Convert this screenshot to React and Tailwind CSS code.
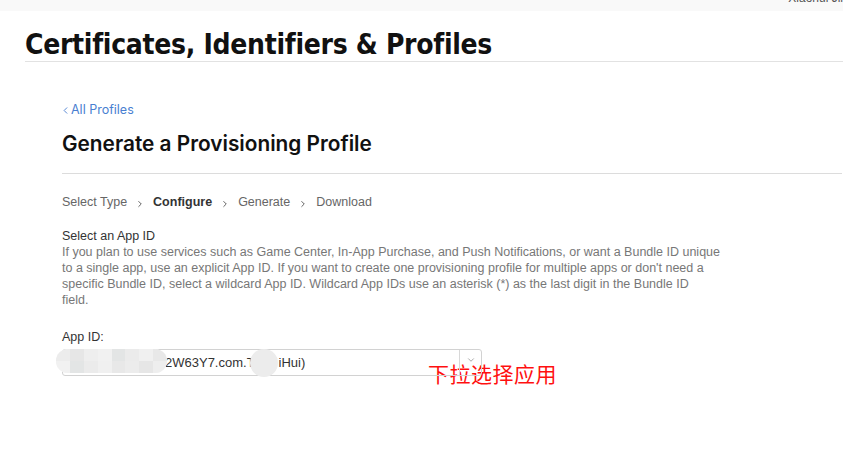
import { ChevronLeft, ChevronRight, ChevronDown } from 'lucide-react';

const steps = [
    { name: 'Select Type', active: false },
    { name: 'Configure', active: true },
    { name: 'Generate', active: false },
    { name: 'Download', active: false },
];

const description = [
    'If you plan to use services such as Game Center, In-App Purchase, and Push Notifications, or want a Bundle ID unique',
    "to a single app, use an explicit App ID. If you want to create one provisioning profile for multiple apps or don't need a",
    'specific Bundle ID, select a wildcard App ID. Wildcard App IDs use an asterisk (*) as the last digit in the Bundle ID',
    'field.',
];

const mosaic = ['#ececec', '#e6e6e6', '#eeeeee', '#f1f1f1', '#e3e5e5', '#ebebeb', '#f0f0f0', '#e8e8e8'];

const App = () => {
    return (
        <div className="w-[843px] h-[466px] bg-white overflow-hidden relative" style={{ fontFamily: '"Liberation Sans", Arial, sans-serif' }}>
            <div className="h-[11px] bg-[#f9f9f9] flex justify-end overflow-hidden">
                <span className="text-[12px] leading-none text-[#555] mt-[-8px] mr-[-4px] whitespace-nowrap">Xiaohui Jin</span>
            </div>

            <div className="pl-[25px]">
                <h1 className="pt-[18px] pb-[1px] text-[28px] leading-[31px] font-bold text-[#111] tracking-[-0.3px] border-b border-[#e2e2e2] font-['Liberation_Sans_Narrow','DejaVu_Sans_Condensed',sans-serif]">
                    Certificates, Identifiers &amp; Profiles
                </h1>
            </div>

            <div className="pl-[62px]">
                <a className="mt-[40px] flex items-center text-[12.5px] leading-[16px] text-[#4a7fd1] font-['Inter',sans-serif] -ml-[2px]">
                    <ChevronLeft size={11} strokeWidth={2} />
                    All Profiles
                </a>
                <h2 className="mt-[14px] pb-[17px] text-[20.8px] leading-[24px] font-semibold text-[#111] border-b border-[#dcdcdc] font-['Inter',sans-serif] mr-[1px]">
                    Generate a Provisioning Profile
                </h2>

                <div className="mt-[20px] flex items-center text-[12.5px] leading-[16px] text-[#666]">
                    {steps.map((step, i) => (
                        <div key={step.name} className="flex items-center">
                            {i > 0 && <ChevronRight size={10} strokeWidth={2.2} className="mx-[8px] mt-[4px] text-[#555]" />}
                            <span className={step.active ? 'font-bold text-[#333]' : ''}>{step.name}</span>
                        </div>
                    ))}
                </div>

                <div className="mt-[18px] text-[12.5px] leading-[16px] text-[#333]">Select an App ID</div>
                <p className="text-[12.5px] leading-[16px] text-[#777]">
                    {description.map((line) => (
                        <span key={line} className="block whitespace-nowrap">{line}</span>
                    ))}
                </p>

                <div className="mt-[21px] text-[12.5px] leading-[16px] text-[#333]">App ID:</div>
                <div className="flex items-start mt-[4px]">
                    <div className="relative w-[420px] h-[27px] border border-[#d2d2d2] rounded-[3px] flex items-center">
                        <span className="flex-1 pl-[102px] text-[13px] text-[#333] whitespace-nowrap flex">
                            <span>2W63Y7.com.T</span>
                            <span className="w-[24px]" />
                            <span>iHui)</span>
                        </span>
                        <div className="w-[22px] h-full border-l border-[#d8d8d8] flex items-center justify-center">
                            <ChevronDown size={10} strokeWidth={2} className="text-[#999] -mt-[6px]" />
                        </div>
                        <div className="absolute left-[-7px] top-[-1px] h-[24px] w-[111px] rounded-full overflow-hidden flex bg-[#f2f2f2]">
                            {mosaic.map((c, i) => (
                                <div key={i} className="flex-1 flex flex-col">
                                    <div className="flex-1" style={{ backgroundColor: c }} />
                                    <div className="flex-1" style={{ backgroundColor: mosaic[(i + 3) % mosaic.length] }} />
                                </div>
                            ))}
                        </div>
                        <div className="absolute left-[187px] top-[-1px] h-[28px] w-[28px] rounded-full bg-[#ececec]" />
                    </div>
                    <div className="ml-[-54px] mt-[9px] text-[21px] leading-[30px] text-[#ff1010] font-['Noto_Sans_CJK_SC',sans-serif] tracking-[0.5px]">
                        下拉选择应用
                    </div>
                </div>
            </div>
        </div>
    );
};

export default App;
